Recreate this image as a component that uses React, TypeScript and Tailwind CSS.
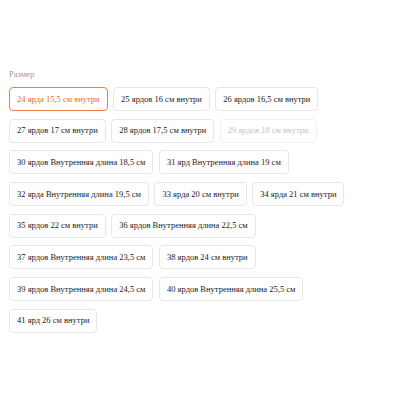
const sizes = [
  "24 ярда 15,5 см внутри",
  "25 ярдов 16 см внутри",
  "26 ярдов 16,5 см внутри",
  "27 ярдов 17 см внутри",
  "28 ярдов 17,5 см внутри",
  "29 ярдов 18 см внутри",
  "30 ярдов Внутренняя длина 18,5 см",
  "31 ярд Внутренняя длина 19 см",
  "32 ярда Внутренняя длина 19,5 см",
  "33 ярда 20 см внутри",
  "34 ярда 21 см внутри",
  "35 ярдов 22 см внутри",
  "36 ярдов Внутренняя длина 22,5 см",
  "37 ярдов Внутренняя длина 23,5 см",
  "38 ярдов 24 см внутри",
  "39 ярдов Внутренняя длина 24,5 см",
  "40 ярдов Внутренняя длина 25,5 см",
  "41 ярд 26 см внутри",
];

export default function App() {
  const selected = sizes[0];
  const disabled = sizes[5];

  return (
    <div className="min-h-[400px] w-[400px] bg-white px-[9px] pt-[68px] font-['Liberation_Serif',serif]">
      <div className="text-[8.5px] leading-[12px] text-[#999999]">Размер</div>
      <div className="mt-[7px] flex flex-wrap gap-x-[5.5px] gap-y-[7.7px]">
        {sizes.map((s) => {
          const isSel = s === selected;
          const isDis = s === disabled;
          return (
            <button
              key={s}
              type="button"
              className={
                isSel
                  ? "h-[24px] rounded-[4px] border border-[#ef7f45] bg-white px-[7px] font-['Liberation_Serif',serif] text-[8.5px] text-[#ec6a2a]"
                  : isDis
                    ? "h-[24px] rounded-[4px] border border-[#f0f0f0] bg-white px-[7px] font-['Liberation_Serif',serif] text-[8.5px] text-[#c4c4c4]"
                    : "h-[24px] rounded-[4px] border border-[#e6e6e6] bg-white px-[7px] font-['Liberation_Serif',serif] text-[8.5px] text-[#222222]"
              }
            >
              {s}
            </button>
          );
        })}
      </div>
    </div>
  );
}
